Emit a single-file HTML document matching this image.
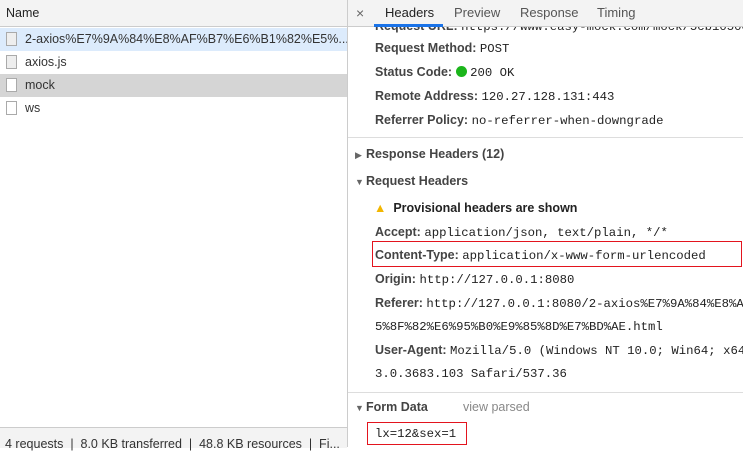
<!DOCTYPE html>
<html><head><style>
body{margin:0;width:743px;height:447px;overflow:hidden;background:#fff;font-family:"Liberation Sans",sans-serif;font-size:12.5px;color:#333;position:relative}
.a{position:absolute;white-space:nowrap}
.m{font-family:"Liberation Mono",monospace;font-size:12.3px;color:#222}
b{color:#444}
.ic{position:absolute;left:6px;width:11px;height:14px;border:1px solid #aaa;background:#fff;box-sizing:border-box}
.ic.g{background:#eee}
.t{font-size:9px;color:#666;display:inline-block;width:11px}
</style></head><body>
<div class="a" style="left:0;top:0;width:347px;height:26px;background:#f3f3f3;border-bottom:1px solid #ccc"></div>
<div class="a" style="left:6px;top:6px;font-size:12.5px;color:#222">Name</div>
<div class="a" style="left:0;top:28px;width:347px;height:23px;background:#dcebfc"></div>
<div class="a" style="left:0;top:74px;width:347px;height:23px;background:#d5d5d5"></div>
<div class="ic g" style="top:32px"></div><div class="a" style="left:25px;top:32px;font-size:12.5px">2-axios%E7%9A%84%E8%AF%B7%E6%B1%82%E5%...</div>
<div class="ic g" style="top:55px"></div><div class="a" style="left:25px;top:55px;font-size:12.5px">axios.js</div>
<div class="ic" style="top:78px"></div><div class="a" style="left:25px;top:78px;font-size:12.5px">mock</div>
<div class="ic" style="top:101px"></div><div class="a" style="left:25px;top:101px;font-size:12.5px">ws</div>
<div class="a" style="left:0;top:427px;width:347px;height:20px;background:#f3f3f3;border-top:1px solid #ccc"></div>
<div class="a" style="left:5px;top:437px;font-size:12.5px">4 requests &nbsp;|&nbsp; 8.0 KB transferred &nbsp;|&nbsp; 48.8 KB resources &nbsp;|&nbsp; Fi...</div>
<div class="a" style="left:347px;top:0;width:1px;height:447px;background:#ccc"></div>
<div class="a" style="left:348px;top:0;width:395px;height:26px;background:#f3f3f3;border-bottom:1px solid #ccc"></div>
<div class="a" style="left:356px;top:5px;font-size:14px;color:#666">×</div>
<div class="a" style="left:385px;top:5px;font-size:13px;color:#222">Headers</div>
<div class="a" style="left:374px;top:24px;width:69px;height:3px;background:#1a73e8"></div>
<div class="a" style="left:454px;top:5px;font-size:13px;color:#555">Preview</div>
<div class="a" style="left:520px;top:5px;font-size:13px;color:#555">Response</div>
<div class="a" style="left:597px;top:5px;font-size:13px;color:#555">Timing</div>
<div class="a" style="left:375px;top:27px;width:368px;height:8px;overflow:hidden"><div class="a" style="top:-8px"><b>Request URL:</b> <span class="m">https://www.easy-mock.com/mock/5cb1050c</span></div></div>
<div class="a" style="left:375px;top:41px"><b>Request Method:</b> <span class="m">POST</span></div>
<div class="a" style="left:375px;top:65px"><b>Status Code:</b> <span style="display:inline-block;width:11px;height:11px;border-radius:50%;background:#1bb51b;vertical-align:-1px"></span> <span class="m">200 OK</span></div>
<div class="a" style="left:375px;top:89px"><b>Remote Address:</b> <span class="m">120.27.128.131:443</span></div>
<div class="a" style="left:375px;top:113px"><b>Referrer Policy:</b> <span class="m">no-referrer-when-downgrade</span></div>
<div class="a" style="left:348px;top:137px;width:395px;height:1px;background:#ddd"></div>
<div class="a" style="left:355px;top:147px"><span class="t">▶</span><b>Response Headers (12)</b></div>
<div class="a" style="left:355px;top:174px"><span class="t">▼</span><b>Request Headers</b></div>
<div class="a" style="left:374px;top:201px"><span style="color:#f2b600">▲</span> &nbsp;<b style="color:#222">Provisional headers are shown</b></div>
<div class="a" style="left:375px;top:225px"><b>Accept:</b> <span class="m">application/json, text/plain, */*</span></div>
<div class="a" style="left:372px;top:241px;width:368px;height:24px;border:1px solid #e3141e"></div>
<div class="a" style="left:375px;top:248px"><b>Content-Type:</b> <span class="m">application/x-www-form-urlencoded</span></div>
<div class="a" style="left:375px;top:272px"><b>Origin:</b> <span class="m">http://127.0.0.1:8080</span></div>
<div class="a" style="left:375px;top:296px"><b>Referer:</b> <span class="m">http://127.0.0.1:8080/2-axios%E7%9A%84%E8%AF%B7</span></div>
<div class="a m" style="left:375px;top:320px">5%8F%82%E6%95%B0%E9%85%8D%E7%BD%AE.html</div>
<div class="a" style="left:375px;top:343px"><b>User-Agent:</b> <span class="m">Mozilla/5.0 (Windows NT 10.0; Win64; x64)</span></div>
<div class="a m" style="left:375px;top:367px">3.0.3683.103 Safari/537.36</div>
<div class="a" style="left:348px;top:392px;width:395px;height:1px;background:#ddd"></div>
<div class="a" style="left:355px;top:400px"><span class="t">▼</span><b>Form Data</b></div>
<div class="a" style="left:463px;top:400px;color:#888">view parsed</div>
<div class="a" style="left:367px;top:422px;width:98px;height:21px;border:1px solid #e3141e"></div>
<div class="a m" style="left:375px;top:427px">lx=12&amp;sex=1</div>
</body></html>
